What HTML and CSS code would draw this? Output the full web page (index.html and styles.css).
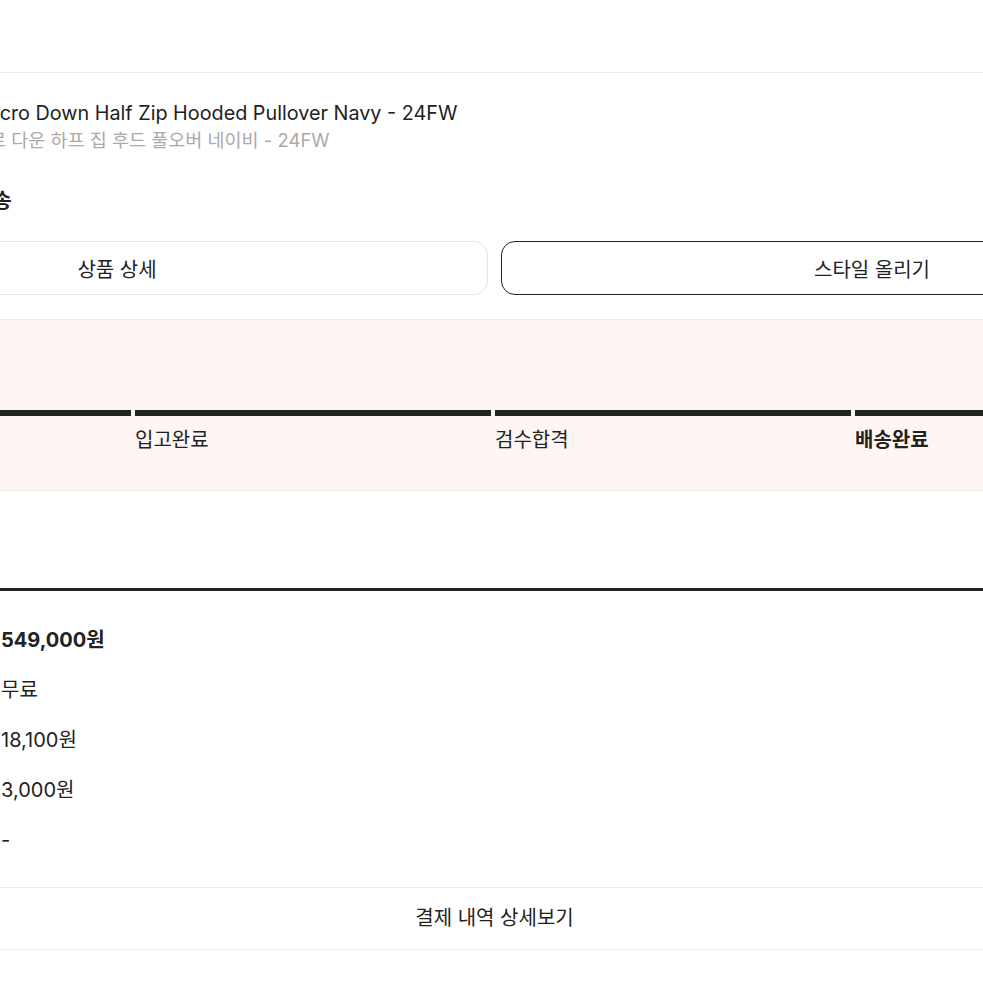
FILE: index.html
```html
<!DOCTYPE html>
<html lang="ko">
<head>
    <meta charset="UTF-8">
    <meta name="viewport" content="width=device-width, initial-scale=1.0">
    <title>구매 내역 상세</title>
    <link rel="stylesheet" href="styles.css">
</head>
<body>

    <div class="page">
        <div class="top-bar"></div>

        <div class="product">
            <p class="product-name">Micro Down Half Zip Hooded Pullover Navy - 24FW</p>
            <p class="product-name-ko">마이크로 다운 하프 집 후드 풀오버 네이비 - 24FW</p>
            <div class="delivery">일반배송</div>
        </div>

        <div class="actions">
            <button class="btn">상품 상세</button>
            <button class="btn btn-dark">스타일 올리기</button>
        </div>

        <div class="progress">
            <div class="steps">
                <div class="step"><div class="step-bar"></div><span class="step-label">발송완료</span></div>
                <div class="step"><div class="step-bar"></div><span class="step-label">입고완료</span></div>
                <div class="step"><div class="step-bar"></div><span class="step-label">검수합격</span></div>
                <div class="step"><div class="step-bar"></div><span class="step-label step-current">배송완료</span></div>
            </div>
        </div>

        <div class="payment">
            <ul class="payment-list">
                <li class="payment-total">549,000원</li>
                <li>무료</li>
                <li>18,100원</li>
                <li>3,000원</li>
                <li>-</li>
            </ul>
            <div class="payment-more">결제 내역 상세보기</div>
        </div>
    </div>

</body>
</html>
```

FILE: styles.css
```css
html, body {
    margin: 0;
    overflow: hidden;
    background: #fff;
}

body {
    font-family: Inter, "Noto Sans CJK KR", sans-serif;
    color: #222;
}

p {
    margin: 0;
}

/* 화면이 왼쪽으로 잘린 상태 그대로 */
.page {
    width: 1497px;
    margin-left: -254px;
}

.top-bar {
    height: 72px;
    border-bottom: 1px solid #ebebeb;
}

.product {
    padding: 27px 0 0 192px;
}

.product-name {
    margin-left: 39px;
    font-size: 19.8px;
    line-height: 26px;
}

.product-name-ko {
    margin-top: 2px;
    font-size: 18.5px;
    line-height: 24px;
    color: #aaa;
}

.delivery {
    margin-top: 35px;
    font-size: 20px;
    font-weight: 700;
    line-height: 28px;
}

.actions {
    display: grid;
    grid-template-columns: 1fr 1fr;
    gap: 13px;
    margin-top: 26px;
}

.btn {
    height: 54px;
    border: 1px solid #e5e5e5;
    border-radius: 14px;
    background: #fff;
    font-family: inherit;
    font-size: 20px;
    color: #222;
}

.btn-dark {
    border-color: #222;
}

.progress {
    margin: 24px -300px 0;
    padding: 90px 332px 36px 329px;
    background: #fdf6f4;
    border-top: 1px solid #ebebeb;
    border-bottom: 1px solid #ebebeb;
}

.steps {
    display: grid;
    grid-template-columns: repeat(4, 1fr);
    gap: 4px;
}

.step-bar {
    height: 6px;
    background: #222;
}

.step-label {
    display: block;
    margin-top: 10px;
    font-size: 20px;
    line-height: 28px;
}

.step-current {
    font-weight: 700;
}

.payment {
    margin: 97px -300px 0;
    border-top: 3px solid #222;
}

.payment-list {
    list-style: none;
    margin: 0;
    padding: 35px 0 33px 555px;
    display: flex;
    flex-direction: column;
    gap: 22px;
    font-size: 20px;
    line-height: 28px;
}

.payment-total {
    font-weight: 700;
}

.payment-more {
    height: 61px;
    line-height: 61px;
    text-align: center;
    font-size: 20px;
    border-top: 1px solid #ebebeb;
    border-bottom: 1px solid #ebebeb;
}
```
